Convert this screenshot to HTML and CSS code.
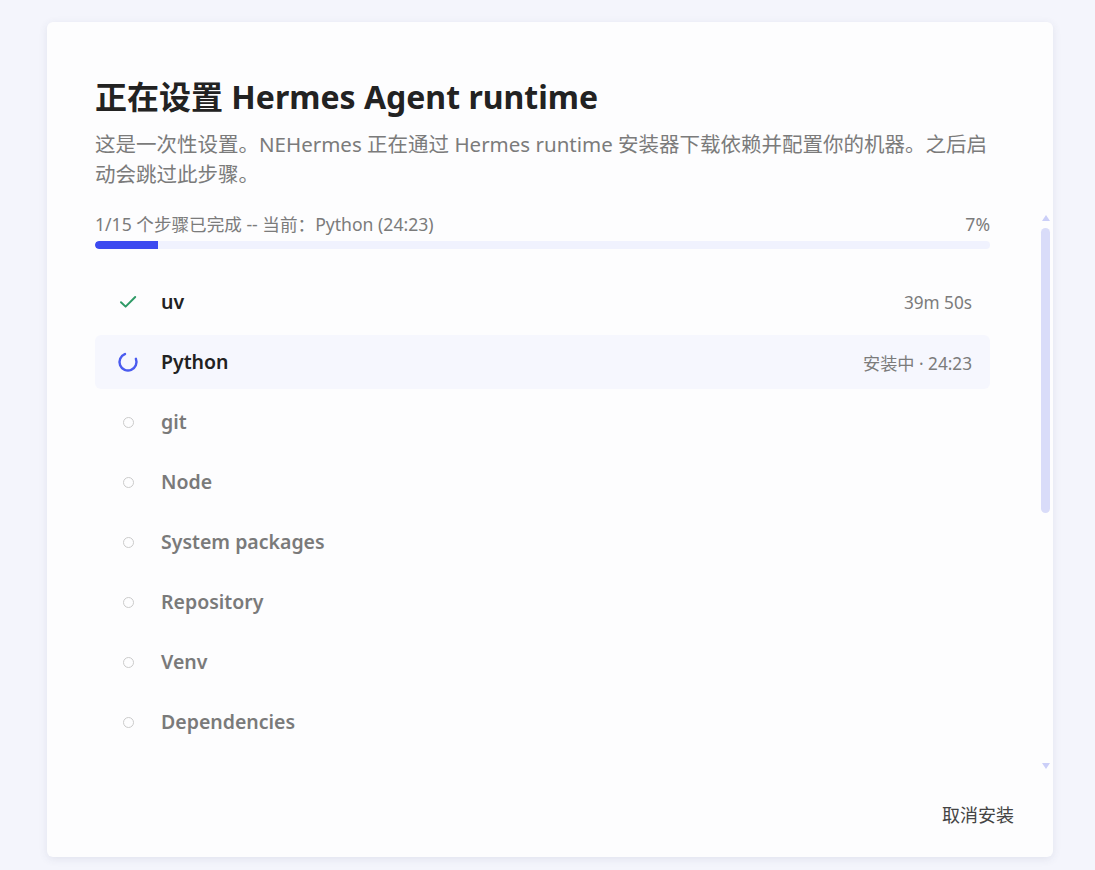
FILE: index.html
```html
<!DOCTYPE html>
<html lang="zh-CN">
<head>
<meta charset="utf-8">
<title>Hermes Agent runtime</title>
<link rel="stylesheet" href="styles.css">
</head>
<body>
<main class="card">
  <header class="header">
    <h1 class="title">正在设置 Hermes Agent runtime</h1>
    <p class="subtitle">这是一次性设置。NEHermes 正在通过 Hermes runtime 安装器下载依赖并配置你的机器。之后启动会跳过此步骤。</p>
  </header>
  <section class="scroll-area">
    <div class="scroll-content">
      <div class="progress-head">
        <span>1/15 个步骤已完成 -- 当前：Python (24:23)</span>
        <span>7%</span>
      </div>
      <div class="track"><div class="fill" style="width:7%"></div></div>
      <ul class="steps">
        <li class="step done">
          <span class="icon"><svg width="20" height="20" viewBox="0 0 20 20"><path d="M3 10.2l4.6 4.4L17.2 5" fill="none" stroke="#2e9a66" stroke-width="2" stroke-linecap="round" stroke-linejoin="round"/></svg></span>
          <span class="name">uv</span>
          <span class="meta">39m 50s</span>
        </li>
        <li class="step active">
          <span class="icon"><svg width="22" height="22" viewBox="0 0 22 22"><circle cx="11" cy="11" r="8.5" fill="none" stroke="#4a5bef" stroke-width="2.4" stroke-linecap="round" stroke-dasharray="40 53.4" transform="rotate(-22 11 11)"/></svg></span>
          <span class="name">Python</span>
          <span class="meta">安装中 · 24:23</span>
        </li>
        <li class="step"><span class="icon"><span class="dot"></span></span><span class="name">git</span></li>
        <li class="step"><span class="icon"><span class="dot"></span></span><span class="name">Node</span></li>
        <li class="step"><span class="icon"><span class="dot"></span></span><span class="name">System packages</span></li>
        <li class="step"><span class="icon"><span class="dot"></span></span><span class="name">Repository</span></li>
        <li class="step"><span class="icon"><span class="dot"></span></span><span class="name">Venv</span></li>
        <li class="step"><span class="icon"><span class="dot"></span></span><span class="name">Dependencies</span></li>
      </ul>
    </div>
    <div class="scrollbar" aria-hidden="true">
      <span class="arrow up"></span>
      <div class="sb-track"><div class="thumb" style="height:285px"></div></div>
      <span class="arrow down"></span>
    </div>
  </section>
  <footer class="footer">
    <button class="cancel" type="button">取消安装</button>
  </footer>
</main>
</body>
</html>
```

FILE: styles.css
```css
* { box-sizing: border-box; }

html, body { height: 100%; }

body {
  margin: 0;
  padding: 22px 42px 13px 47px;
  background: #f4f5fc;
  font-family: "Segoe UI", "Noto Sans", "Noto Sans CJK SC", sans-serif;
  color: #222;
}

.card {
  height: 835px;
  background: #fdfdfe;
  border-radius: 6px;
  box-shadow: 0 2px 8px rgba(60, 64, 110, 0.10);
  padding: 55px 3px 0 48px;
  display: flex;
  flex-direction: column;
}

.header { width: 895px; }

.title {
  margin: 0;
  font-size: 32px;
  line-height: 40px;
  font-weight: 700;
  color: #222;
}

.subtitle {
  margin: 12px 0 0;
  font-size: 20.5px;
  line-height: 30px;
  color: #7b7b7b;
}

.scroll-area {
  margin-top: 23px;
  height: 560px;
  display: flex;
}

.scroll-content {
  width: 895px;
  overflow: hidden;
  padding-top: 1px;
}

.scrollbar {
  width: 9px;
  margin-left: 51px;
  display: flex;
  flex-direction: column;
  align-items: center;
}

.arrow {
  width: 0;
  height: 0;
  border-left: 4.5px solid transparent;
  border-right: 4.5px solid transparent;
}

.arrow.up {
  margin: 3px 0 7px;
  border-bottom: 6px solid #cbcff8;
}

.arrow.down {
  margin: 7px 0 3px;
  border-top: 6px solid #cbcff8;
}

.sb-track {
  flex: 1;
  width: 9px;
}

.thumb {
  width: 9px;
  background: #d9dcf9;
  border-radius: 5px;
}

.progress-head {
  display: flex;
  justify-content: space-between;
  font-size: 17.6px;
  line-height: 22px;
  color: #7b7b7b;
}

.track {
  margin-top: 6px;
  height: 8px;
  border-radius: 4px;
  background: #f0f2fe;
  overflow: hidden;
}

.fill {
  height: 100%;
  background: #3c4af0;
  border-radius: 4px 0 0 4px;
}

.steps {
  list-style: none;
  margin: 26px 0 0;
  padding: 0;
  display: flex;
  flex-direction: column;
  gap: 6px;
}

.step {
  height: 54px;
  display: flex;
  align-items: center;
  padding: 0 18px 0 21px;
  border-radius: 6px;
  color: #7a7a7a;
}

.step.done, .step.active { color: #222; }

.step.active { background: #f6f7fe; }

.icon {
  width: 24px;
  height: 24px;
  margin-right: 21px;
  display: flex;
  align-items: center;
  justify-content: center;
}

.dot {
  width: 11px;
  height: 11px;
  border: 1.5px solid #cbcbcb;
  border-radius: 50%;
}

.name {
  font-size: 19.5px;
  font-weight: 600;
  line-height: 28px;
}

.meta {
  margin-left: auto;
  font-size: 17.2px;
  color: #7b7b7b;
}

.footer {
  margin-top: 25px;
  display: flex;
  justify-content: flex-end;
  padding-right: 24px;
}

.cancel {
  border: none;
  background: transparent;
  font-family: inherit;
  font-size: 18px;
  line-height: 24px;
  padding: 6px 12px;
  color: #444;
  cursor: pointer;
}
```
